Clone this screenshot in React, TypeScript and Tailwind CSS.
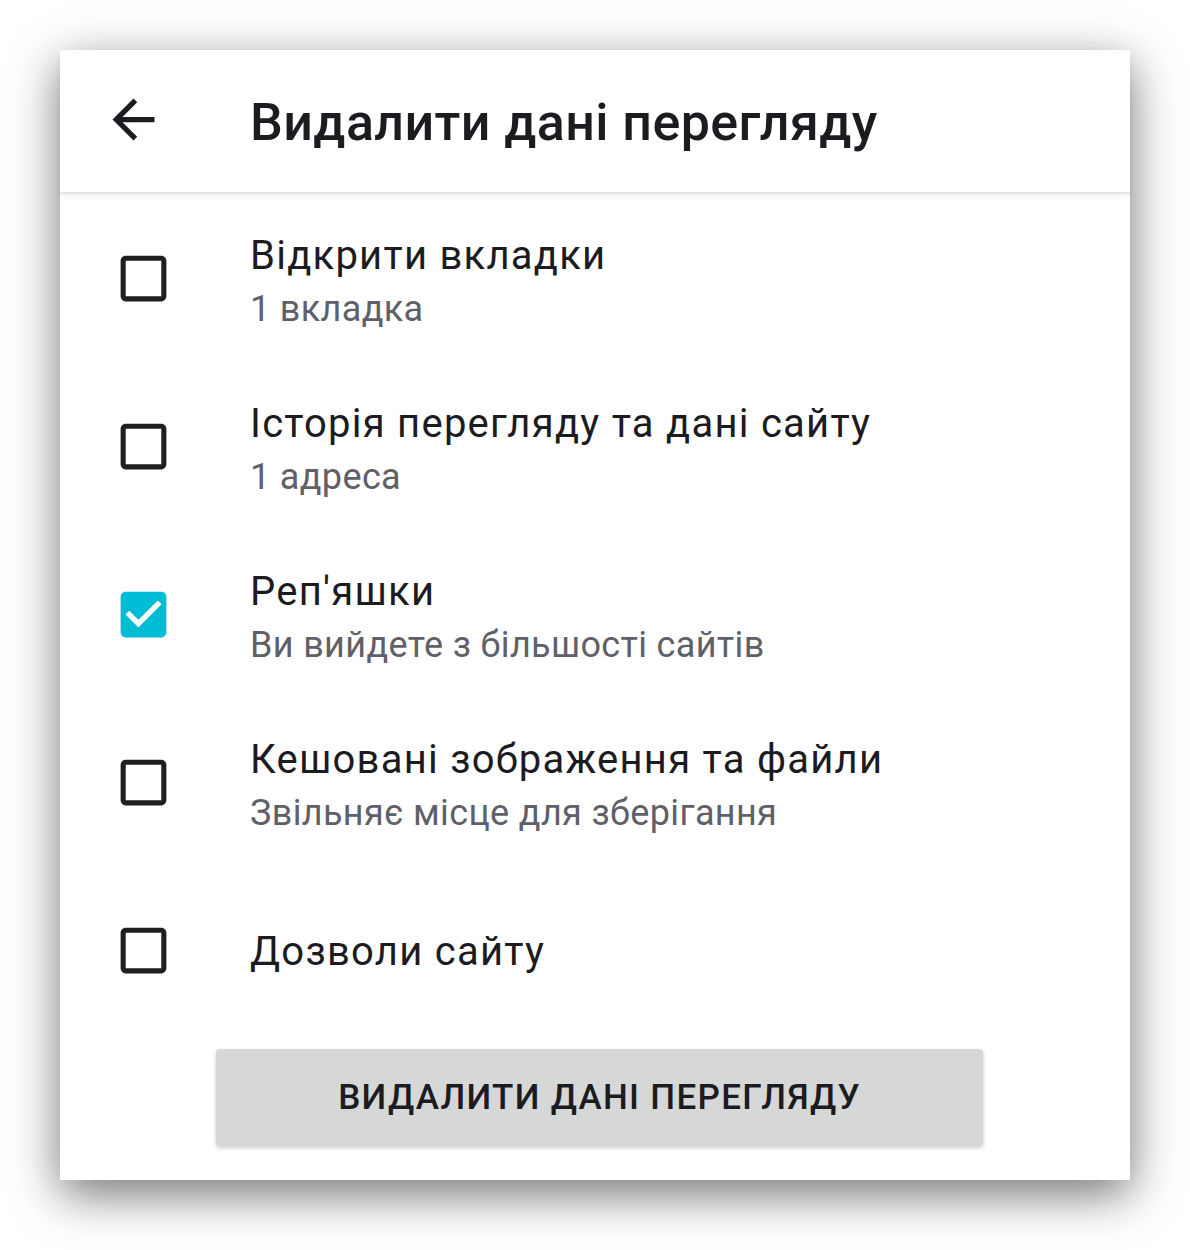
import React from "react";

const font = { fontFamily: "Roboto, 'Noto Sans', sans-serif" };

function Box({ checked }: { checked: boolean }) {
  return (
    <svg width="61" height="61" viewBox="0 0 24 24" className="shrink-0">
      {checked ? (
        <path
          fill="#00bcd4"
          d="M19 3H5c-1.11 0-2 .9-2 2v14c0 1.1.89 2 2 2h14c1.11 0 2-.9 2-2V5c0-1.1-.89-2-2-2zm-9 14l-5-5 1.41-1.41L10 14.17l7.59-7.59L19 8l-9 9z"
        />
      ) : (
        <path
          fill="#1f1f23"
          d="M19 5v14H5V5h14m0-2H5c-1.1 0-2 .9-2 2v14c0 1.1.9 2 2 2h14c1.1 0 2-.9 2-2V5c0-1.1-.9-2-2-2z"
        />
      )}
      {checked && (
        <path fill="#ffffff" d="M10 17l-5-5 1.41-1.41L10 14.17l7.59-7.59L19 8l-9 9z" />
      )}
    </svg>
  );
}

const items = [
  { title: "Відкрити вкладки", sub: "1 вкладка", checked: false },
  { title: "Історія перегляду та дані сайту", sub: "1 адреса", checked: false },
  { title: "Реп'яшки", sub: "Ви вийдете з більшості сайтів", checked: true },
  { title: "Кешовані зображення та файли", sub: "Звільняє місце для зберігання", checked: false },
  { title: "Дозволи сайту", sub: "", checked: false },
];

export default function App() {
  return (
    <div className="w-[1190px] h-[1250px] bg-white pt-[50px] pl-[60px] overflow-hidden" style={font}>
      <div className="w-[1070px] h-[1130px] bg-white flex flex-col shadow-[0_14px_45px_rgba(0,0,0,0.55)]">
        <div className="relative z-10 h-[144px] flex items-center border-b-2 border-[#e4e4e4] shadow-[0_3px_6px_rgba(0,0,0,0.05)] bg-white">
          <svg width="63" height="63" viewBox="0 0 24 24" className="ml-[42px] shrink-0 -mt-[3px]">
            <path fill="#1c1b1f" d="M20 11H7.83l5.59-5.59L12 4l-8 8 8 8 1.41-1.41L7.83 13H20v-2z" />
          </svg>
          <div className="ml-[85px] mt-[3px] text-[52px] leading-[60px] font-medium text-[#1c1b1f] tracking-[0.4px]">
            Видалити дані перегляду
          </div>
        </div>
        <div className="flex flex-col">
          {items.map((it, i) => (
            <div key={i} className="h-[168px] flex items-center pl-[53px]">
              <Box checked={it.checked} />
              <div className="ml-[76px] flex flex-col pt-[4px]">
                <div className="text-[40px] leading-[52px] text-[#1c1b1f] tracking-[1.25px]">{it.title}</div>
                {it.sub && (
                  <div className="mt-[6px] text-[36px] leading-[42px] text-[#5f6068] tracking-[0.35px]">{it.sub}</div>
                )}
              </div>
            </div>
          ))}
        </div>
        <div className="mt-[15px] ml-[156px] w-[767px] h-[97px] bg-[#d6d7d7] rounded-[4px] shadow-[0_2px_4px_rgba(0,0,0,0.2)] flex items-center justify-center">
          <span className="text-[35px] font-medium text-[#1c1b1f] uppercase tracking-[1.3px] mt-[2px]">
            Видалити дані перегляду
          </span>
        </div>
      </div>
    </div>
  );
}
